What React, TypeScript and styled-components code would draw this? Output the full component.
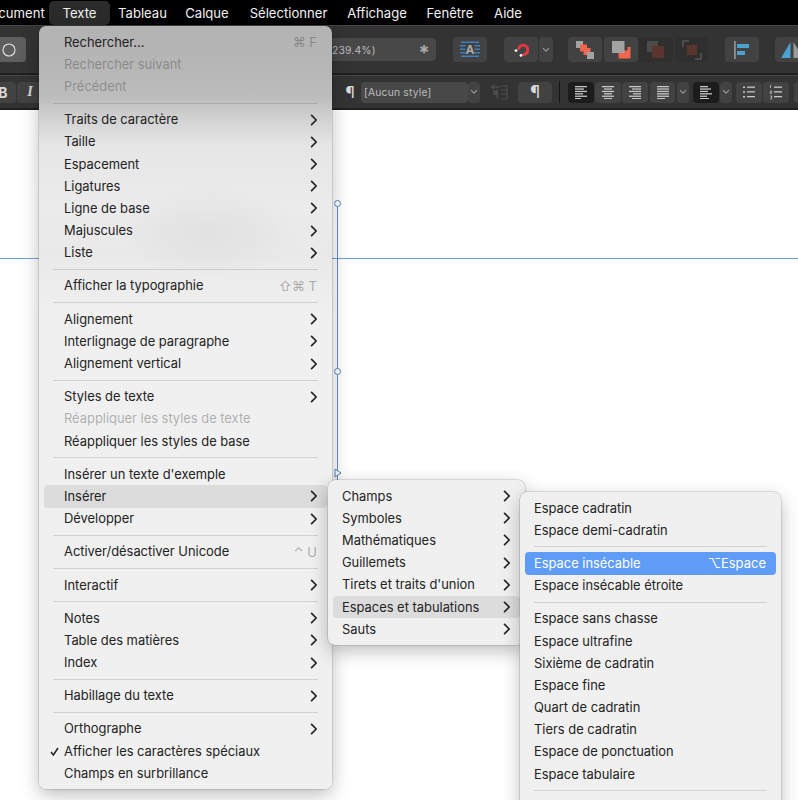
import styled, { createGlobalStyle } from 'styled-components';

const Global = createGlobalStyle`
  html, body {
    margin: 0;
    padding: 0;
    background: #fff;
  }
  #root {
    height: 800px;
  }
`

const Page = styled.div`
  position: relative;
  width: 798px;
  height: 800px;
  overflow: hidden;
  background: #fff;
  font-family: Inter, "Liberation Sans", "DejaVu Sans", sans-serif;
`

const MenuBar = styled.div`
  display: flex;
  align-items: center;
  height: 25px;
  background: #000;
  color: #f2f2f2;
  font-size: 13.1px;
  overflow: hidden;
`

const BarItem = styled.div<{ $active?: boolean; $w: number; $gapAfter?: number }>`
  flex: none;
  width: ${p => p.$w}px;
  margin-right: ${p => p.$gapAfter || 0}px;
  height: 24px;
  display: flex;
  align-items: center;
  justify-content: center;
  border-radius: 5px;
  background: ${p => (p.$active ? '#2b2b2b' : 'transparent')};
`

const ToolRow = styled.div<{ $h: number }>`
  display: flex;
  align-items: center;
  height: ${p => p.$h}px;
  background: #333;
  border-top: 1px solid #444;
  border-bottom: 2px solid #1f1f1f;
  overflow: hidden;
`

const Tool = styled.div<{ $w: number; $h?: number; $tone?: 'dark' | 'dim' | 'light' | 'flat'; $gapAfter?: number; $before?: number }>`
  flex: none;
  width: ${p => p.$w}px;
  height: ${p => p.$h || 25}px;
  margin-left: ${p => p.$before || 0}px;
  margin-right: ${p => p.$gapAfter || 0}px;
  display: flex;
  align-items: center;
  justify-content: center;
  border-radius: 4px;
  color: #c4c4c4;
  background: ${p =>
    p.$tone === 'dark' ? '#1c1c1c'
    : p.$tone === 'dim' ? '#2f2f2f'
    : p.$tone === 'light' ? '#5e5e5e'
    : p.$tone === 'flat' ? 'transparent'
    : '#424242'};
`

const Field = styled.div<{ $w: number; $h: number; $pad: number; $gapAfter?: number }>`
  flex: none;
  width: ${p => p.$w}px;
  height: ${p => p.$h}px;
  margin-right: ${p => p.$gapAfter || 0}px;
  padding: 0 6px 0 ${p => p.$pad}px;
  box-sizing: border-box;
  display: flex;
  align-items: center;
  justify-content: space-between;
  background: #484848;
  border-radius: 4px;
  color: #bdbdbd;
  font-size: 10.3px;
  letter-spacing: 0.2px;
  white-space: nowrap;
`

const Star = styled.span`
  font-size: 20px;
  font-weight: 700;
  color: #a8a8a8;
  line-height: 1;
  padding-top: 7px;
`

const Glyph = styled.span<{ $bold?: boolean; $italic?: boolean; $size?: number }>`
  font-family: ${p => (p.$italic ? '"Liberation Serif", serif' : 'inherit')};
  font-weight: ${p => (p.$bold ? 700 : 400)};
  font-style: ${p => (p.$italic ? 'italic' : 'normal')};
  font-size: ${p => p.$size || 14}px;
  color: #d8d8d8;
`

const Divider = styled.div<{ $gapAfter: number }>`
  flex: none;
  width: 1px;
  height: 22px;
  background: #161616;
  margin-right: ${p => p.$gapAfter}px;
`

const Spacer = styled.div<{ $w: number }>`
  flex: none;
  width: ${p => p.$w}px;
`

const GuideH = styled.div`
  position: absolute;
  left: 0;
  right: 0;
  top: 258px;
  height: 1px;
  background: #6f9fd8;
`

const GuideV = styled.div`
  position: absolute;
  left: 337px;
  top: 203px;
  width: 1px;
  height: 280px;
  background: #5f8fd0;
`

const Handle = styled.div<{ $top: number }>`
  position: absolute;
  left: 334px;
  top: ${p => p.$top}px;
  width: 5px;
  height: 5px;
  border: 1px solid #4f86cc;
  border-radius: 50%;
  background: #fff;
`

const Arrow = styled.svg`
  position: absolute;
  left: 334px;
  top: 468px;
`

const Menu = styled.div<{ $left: number; $top: number; $w: number; $h?: number; $z: number }>`
  position: absolute;
  left: ${p => p.$left}px;
  top: ${p => p.$top}px;
  width: ${p => p.$w}px;
  ${p => (p.$h ? `height: ${p.$h}px;` : '')}
  z-index: ${p => p.$z};
  box-sizing: border-box;
  padding: 5px;
  border-radius: 7px;
  background: #f0f0f0;
  box-shadow: 0 0 0 0.5px rgba(0, 0, 0, 0.22), 0 6px 18px rgba(0, 0, 0, 0.26);
  color: #232323;
  font-size: 12.9px;
`

// le haut du menu laisse deviner la barre d'outils sombre
const FrostedMenu = styled(Menu)`
  background:
    radial-gradient(ellipse 90px 45px at 170px 205px, rgba(0, 0, 0, 0.04), transparent),
    linear-gradient(to bottom, #b3b3b3 0, #b6b6b6 40px, #bdbdbd 72px, #d4d4d4 95px, #e6e6e6 120px, #ebebeb 180px, #e9e9e9 230px, #f0f0f0 290px);
`

const Row = styled.div<{ $hover?: boolean; $selected?: boolean; $off?: boolean; $pad: number }>`
  position: relative;
  display: flex;
  align-items: center;
  justify-content: space-between;
  height: 22.2px;
  padding: 0 9px 0 ${p => p.$pad}px;
  border-radius: 4px;
  white-space: nowrap;
  background: ${p => (p.$selected ? '#5f9cf5' : p.$hover ? '#dcdcdc' : 'transparent')};
  color: ${p => (p.$selected ? '#fff' : p.$off ? 'rgba(60, 60, 60, 0.38)' : 'inherit')};
`

const Keys = styled.span<{ $selected?: boolean }>`
  color: ${p => (p.$selected ? '#fff' : 'rgba(70, 70, 70, 0.42)')};
  font-family: Inter, "DejaVu Sans", sans-serif;
  font-size: 13px;
  margin-right: 1px;
`

const Check = styled.svg`
  position: absolute;
  left: 6px;
  top: 7px;
`

const Sep = styled.div<{ $inset: number }>`
  height: 11px;
  display: flex;
  align-items: center;
  padding: 0 ${p => p.$inset}px;
  &::after {
    content: '';
    flex: 1;
    height: 1px;
    background: rgba(0, 0, 0, 0.12);
  }
`

const Chevron = () => (
  <svg width="8" height="12" viewBox="0 0 8 12">
    <path d="M1.6 1.4 6.2 6 1.6 10.6" fill="none" stroke="#222" strokeWidth="1.7" strokeLinecap="round" strokeLinejoin="round" />
  </svg>
)

const SmallChevron = () => (
  <svg width="8" height="6" viewBox="0 0 8 6">
    <path d="M1 1.2 4 4.2 7 1.2" fill="none" stroke="#9a9a9a" strokeWidth="1.1" />
  </svg>
)

type Item = { label: string; arrow?: boolean; keys?: string; off?: boolean; hover?: boolean; selected?: boolean; check?: boolean }

const mainMenu: Item[][] = [
  [{ label: 'Rechercher...', keys: '⌘ F' }, { label: 'Rechercher suivant', off: true }, { label: 'Précédent', off: true }],
  [
    { label: 'Traits de caractère', arrow: true },
    { label: 'Taille', arrow: true },
    { label: 'Espacement', arrow: true },
    { label: 'Ligatures', arrow: true },
    { label: 'Ligne de base', arrow: true },
    { label: 'Majuscules', arrow: true },
    { label: 'Liste', arrow: true },
  ],
  [{ label: 'Afficher la typographie', keys: '⇧⌘ T' }],
  [
    { label: 'Alignement', arrow: true },
    { label: 'Interlignage de paragraphe', arrow: true },
    { label: 'Alignement vertical', arrow: true },
  ],
  [
    { label: 'Styles de texte', arrow: true },
    { label: 'Réappliquer les styles de texte', off: true },
    { label: 'Réappliquer les styles de base' },
  ],
  [
    { label: "Insérer un texte d'exemple" },
    { label: 'Insérer', arrow: true, hover: true },
    { label: 'Développer', arrow: true },
  ],
  [{ label: 'Activer/désactiver Unicode', keys: '⌃ U' }],
  [{ label: 'Interactif', arrow: true }],
  [
    { label: 'Notes', arrow: true },
    { label: 'Table des matières', arrow: true },
    { label: 'Index', arrow: true },
  ],
  [{ label: 'Habillage du texte', arrow: true }],
  [
    { label: 'Orthographe', arrow: true },
    { label: 'Afficher les caractères spéciaux', check: true },
    { label: 'Champs en surbrillance' },
  ],
]

const insertMenu: Item[][] = [
  [
    { label: 'Champs', arrow: true },
    { label: 'Symboles', arrow: true },
    { label: 'Mathématiques', arrow: true },
    { label: 'Guillemets', arrow: true },
    { label: "Tirets et traits d'union", arrow: true },
    { label: 'Espaces et tabulations', arrow: true, hover: true },
    { label: 'Sauts', arrow: true },
  ],
]

const spaceMenu: Item[][] = [
  [{ label: 'Espace cadratin' }, { label: 'Espace demi-cadratin' }],
  [{ label: 'Espace insécable', keys: '⌥Espace', selected: true }, { label: 'Espace insécable étroite' }],
  [
    { label: 'Espace sans chasse' },
    { label: 'Espace ultrafine' },
    { label: 'Sixième de cadratin' },
    { label: 'Espace fine' },
    { label: 'Quart de cadratin' },
    { label: 'Tiers de cadratin' },
    { label: 'Espace de ponctuation' },
    { label: 'Espace tabulaire' },
  ],
  [],
]

function MenuRows({ sections, pad, inset }: { sections: Item[][]; pad: number; inset: number }) {
  return (
    <>
      {sections.map((section, i) => (
        <div key={i}>
          {i > 0 && <Sep $inset={inset} />}
          {section.map(item => (
            <Row key={item.label} $pad={pad} $hover={item.hover} $selected={item.selected} $off={item.off}>
              {item.check && (
                <Check width="9" height="9" viewBox="0 0 9 9">
                  <path d="M1 5 3.4 8 8 1" fill="none" stroke="#222" strokeWidth="1.5" />
                </Check>
              )}
              <span>{item.label}</span>
              {item.arrow && <Chevron />}
              {item.keys && <Keys $selected={item.selected}>{item.keys}</Keys>}
            </Row>
          ))}
        </div>
      ))}
    </>
  )
}

// lignes de texte : largeurs + alignement
function TextLines({ widths, align }: { widths: number[]; align: 'l' | 'c' | 'r' }) {
  return (
    <svg width="14" height="14" viewBox="0 0 14 14">
      {widths.map((w, i) => (
        <rect
          key={i}
          x={align === 'l' ? 1 : align === 'r' ? 13 - w : 7 - w / 2}
          y={1 + i * 2.4}
          width={w}
          height="1.3"
          fill="#c6c6c6"
        />
      ))}
    </svg>
  )
}

const BulletList = () => (
  <svg width="14" height="14" viewBox="0 0 14 14">
    {[1.5, 6.2, 11].map(y => (
      <g key={y}>
        <rect x="1" y={y} width="2" height="1.5" fill="#c6c6c6" />
        <rect x="5" y={y} width="8" height="1.3" fill="#c6c6c6" />
      </g>
    ))}
  </svg>
)

const NumberList = () => (
  <svg width="14" height="16" viewBox="0 0 14 16">
    <path d="M1.5 1v3M1 7h1.6v1.2H1.2v1.2h1.6M1 12h1.6v3H1" fill="none" stroke="#c6c6c6" strokeWidth="0.8" />
    {[2.5, 7.2, 12].map(y => (
      <rect key={y} x="5" y={y} width="8" height="1.3" fill="#c6c6c6" />
    ))}
  </svg>
)

const FrameIcon = () => (
  <svg width="20" height="20" viewBox="0 0 20 20">
    {[1.5, 5, 8.5, 12, 15.5].map((y, i) => (
      <rect key={y} x={i === 0 || i === 4 ? 1 : 0} y={y} width={i === 0 || i === 4 ? 18 : 20} height="1.5" fill="#3d80bd" />
    ))}
    <rect x="5.5" y="3.5" width="9" height="11" fill="#424242" />
    <text x="10" y="13.5" textAnchor="middle" fontSize="12" fontWeight="700" fill="#a9a9a9" fontFamily="Inter, sans-serif">A</text>
  </svg>
)

const MagnetIcon = () => (
  <svg width="20" height="20" viewBox="0 0 20 20">
    <path d="M7.4 9.6A4.7 4.7 0 1 1 11.6 14.6" fill="none" stroke="#df3a42" strokeWidth="3" />
    <circle cx="5" cy="10.6" r="1.4" fill="#f2f2f2" />
    <circle cx="10" cy="15.4" r="1.4" fill="#f2f2f2" />
  </svg>
)

const GroupIcon = () => (
  <svg width="20" height="20" viewBox="0 0 20 20">
    <rect x="1" y="1" width="7" height="7" fill="#a2a2a2" />
    <rect x="5" y="4.5" width="7" height="7" fill="#f2654f" />
    <rect x="8.5" y="8" width="7" height="7" fill="#f2654f" />
    <rect x="12" y="12" width="7" height="7" fill="#a2a2a2" />
  </svg>
)

const UngroupIcon = () => (
  <svg width="20" height="20" viewBox="0 0 20 20">
    <path d="M8 11h9v-3.5h3V19H8z" fill="#f2654f" transform="translate(-0.5 -0.5)" />
    <rect x="1" y="1" width="12.5" height="12" fill="#a2a2a2" />
  </svg>
)

const BackIcon = () => (
  <svg width="20" height="20" viewBox="0 0 20 20">
    <rect x="1" y="1" width="11" height="11" fill="#4b4b4b" />
    <rect x="6" y="6" width="12" height="12" fill="#5a352e" />
  </svg>
)

const BackAllIcon = () => (
  <svg width="20" height="20" viewBox="0 0 20 20">
    <path d="M1 7V1h6M19 13v6h-6" fill="none" stroke="#4b4b4b" strokeWidth="2" />
    <rect x="5" y="5" width="10" height="10" fill="#5a352e" />
  </svg>
)

const AlignIcon = () => (
  <svg width="20" height="20" viewBox="0 0 20 20">
    <rect x="2" y="1" width="1.8" height="18" fill="#8f8f8f" />
    <rect x="5" y="4" width="12" height="4" fill="#4aa3d2" />
    <rect x="5" y="11" width="8" height="4" fill="#4aa3d2" />
  </svg>
)

const FlipIcon = () => (
  <svg width="26" height="20" viewBox="0 0 26 20">
    <path d="M11.5 2v16H2z" fill="#4aa3d2" />
    <path d="M14.5 2v16H24z" fill="#9a9a9a" />
  </svg>
)

const DimPara = () => (
  <svg width="18" height="16" viewBox="0 0 18 16">
    <path d="M1 3h9M4 1 1.5 3 4 5" fill="none" stroke="#4c4c4c" strokeWidth="1.4" />
    <path d="M5 6h3v9H6.6v-4H5.5A2.5 2.5 0 0 1 5 6z" fill="#4c4c4c" />
    <path d="M11 2h6v13h-6M11 6h6M11 10h6" fill="none" stroke="#4c4c4c" strokeWidth="1.2" />
  </svg>
)

const CircleIcon = () => (
  <svg width="16" height="16" viewBox="0 0 16 16">
    <circle cx="8" cy="8" r="6" fill="none" stroke="#e6e6e6" strokeWidth="1.1" />
  </svg>
)

export default function App() {
  return (
    <Page>
      <Global />
      <MenuBar>
        <BarItem $w={43} $gapAfter={6}>cument</BarItem>
        <BarItem $w={61} $active>Texte</BarItem>
        <BarItem $w={65}>Tableau</BarItem>
        <BarItem $w={64}>Calque</BarItem>
        <BarItem $w={99}>Sélectionner</BarItem>
        <BarItem $w={78}>Affichage</BarItem>
        <BarItem $w={68}>Fenêtre</BarItem>
        <BarItem $w={48}>Aide</BarItem>
      </MenuBar>

      <ToolRow $h={47}>
        <Tool $w={34} $before={-8} $tone="light" $gapAfter={294}><CircleIcon /></Tool>
        <Field $w={116} $h={23} $pad={8} $gapAfter={17}>
          <span>(239.4%)</span>
          <Star>*</Star>
        </Field>
        <Tool $w={34} $gapAfter={17}><FrameIcon /></Tool>
        <Tool $w={34} $gapAfter={1}><MagnetIcon /></Tool>
        <Tool $w={14} $gapAfter={15}><SmallChevron /></Tool>
        <Tool $w={34} $gapAfter={2}><GroupIcon /></Tool>
        <Tool $w={34} $gapAfter={1}><UngroupIcon /></Tool>
        <Tool $w={34} $gapAfter={2} $tone="dim"><BackIcon /></Tool>
        <Tool $w={33} $gapAfter={17} $tone="dim"><BackAllIcon /></Tool>
        <Tool $w={34} $gapAfter={16}><AlignIcon /></Tool>
        <Tool $w={34}><FlipIcon /></Tool>
      </ToolRow>

      <ToolRow $h={32}>
        <Tool $w={26} $h={21} $before={-10} $gapAfter={1}><Glyph $bold>B</Glyph></Tool>
        <Tool $w={26} $h={21} $gapAfter={300}><Glyph $italic $bold>I</Glyph></Tool>
        <Tool $w={14} $h={21} $tone="flat"><Glyph $size={16}>¶</Glyph></Tool>
        <Spacer $w={4} />
        <Field $w={107} $h={21} $pad={3}><span>[Aucun style]</span></Field>
        <Tool $w={12} $h={21} $gapAfter={9}><SmallChevron /></Tool>
        <Tool $w={20} $h={21} $tone="flat" $gapAfter={9}><DimPara /></Tool>
        <Tool $w={34} $h={21} $gapAfter={7}><Glyph $size={17}>¶</Glyph></Tool>
        <Divider $gapAfter={8} />
        <Tool $w={26} $h={21} $tone="dark" $gapAfter={1}><TextLines widths={[12, 9, 12, 8, 12, 6]} align="l" /></Tool>
        <Tool $w={26} $h={21} $gapAfter={1}><TextLines widths={[12, 8, 12, 8, 12, 8]} align="c" /></Tool>
        <Tool $w={26} $h={21} $gapAfter={2}><TextLines widths={[12, 9, 12, 8, 12, 9]} align="r" /></Tool>
        <Tool $w={25} $h={21} $gapAfter={2}><TextLines widths={[12, 12, 12, 12, 12, 8]} align="l" /></Tool>
        <Tool $w={12} $h={21} $gapAfter={4}><SmallChevron /></Tool>
        <Tool $w={26} $h={21} $tone="dark" $gapAfter={1}><TextLines widths={[8, 11, 8, 12, 7, 9]} align="l" /></Tool>
        <Tool $w={12} $h={21} $gapAfter={4}><SmallChevron /></Tool>
        <Tool $w={26} $h={21} $gapAfter={1}><BulletList /></Tool>
        <Tool $w={26} $h={21} $gapAfter={5}><NumberList /></Tool>
        <Tool $w={26} $h={21} />
      </ToolRow>

      <GuideH />
      <GuideV />
      <Handle $top={200} />
      <Handle $top={368} />
      <Arrow width="8" height="10" viewBox="0 0 8 10">
        <path d="M1 1 7 5 1 9z" fill="#fff" stroke="#4f86cc" />
      </Arrow>

      <FrostedMenu $left={39} $top={26} $w={293} $z={1}>
        <MenuRows sections={mainMenu} pad={20} inset={9} />
      </FrostedMenu>
      <Menu $left={328} $top={480} $w={197} $z={2}>
        <MenuRows sections={insertMenu} pad={9} inset={9} />
      </Menu>
      <Menu $left={520} $top={492} $w={261} $h={340} $z={3}>
        <MenuRows sections={spaceMenu} pad={9} inset={9} />
      </Menu>
    </Page>
  )
}
